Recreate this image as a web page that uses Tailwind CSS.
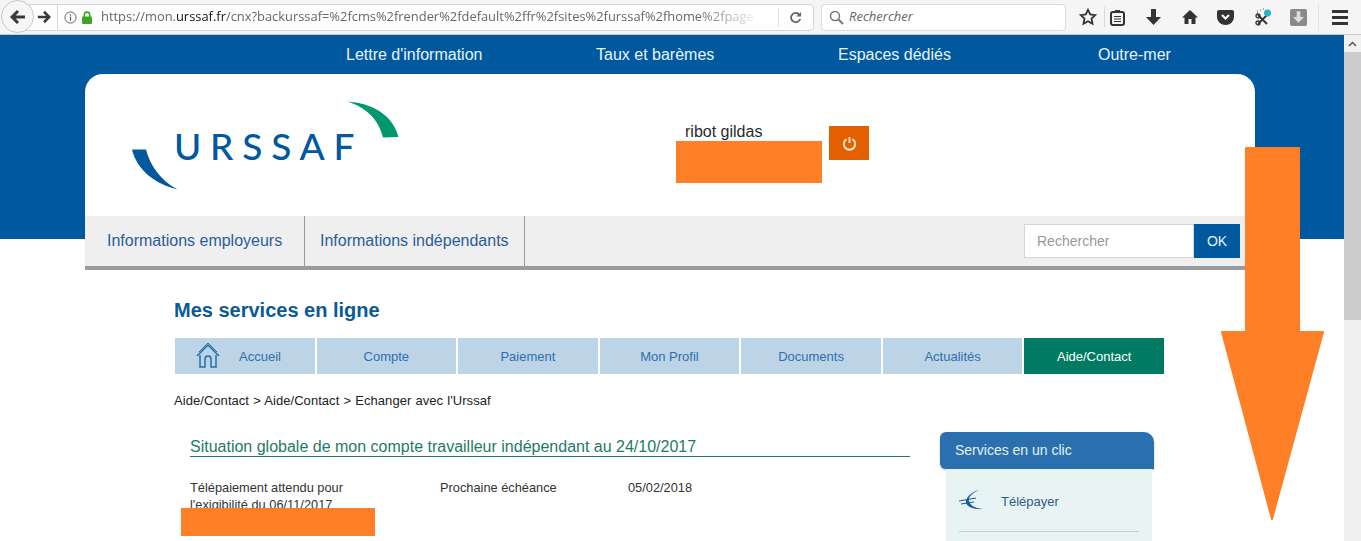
<!DOCTYPE html>
<html lang="fr">
<head>
    <meta charset="UTF-8">
    <title>Urssaf - Mes services en ligne</title>
    <script src="https://cdn.jsdelivr.net/npm/@tailwindcss/browser@4"></script>
</head>
<body class="h-[541px] w-[1361px] overflow-hidden bg-white font-['Liberation_Sans',Arial,sans-serif] relative">
    <!-- browser toolbar -->
    <div class="h-[35px] bg-[#f5f5f5] border-b border-[#c3ccd6] flex items-center relative">
        <div class="absolute left-[1px] top-[0px] w-[33px] h-[33px] rounded-full bg-[#f6f6f6] border border-[#c8c8c8] flex items-center justify-center z-10">
            <svg width="16" height="16" viewBox="0 0 16 16"><path d="M8 2 2 8l6 6M2.500 8H15" fill="none" stroke="#3a3a3a" stroke-width="3"/></svg>
        </div>
        <div class="ml-[20px] w-[794px] h-[27px] bg-white border border-[#d5d5d5] rounded-r-sm flex items-center">
            <svg class="ml-[16px]" width="14" height="14" viewBox="0 0 16 16"><path d="M8 2 14 8l-6 6M13 8H1" fill="none" stroke="#3a3a3a" stroke-width="3"/></svg>
            <div class="w-px h-[27px] bg-[#d5d5d5] ml-[6px]"></div>
            <svg class="ml-[6px]" width="13" height="13" viewBox="0 0 14 14"><circle cx="7" cy="7" r="6" fill="none" stroke="#555" stroke-width="1"/><path d="M7 6v4.500M7 3.500v1.500" stroke="#555" stroke-width="1.300"/></svg>
            <svg class="ml-[4px]" width="12" height="13" viewBox="0 0 12 13"><rect x="1" y="5.500" width="10" height="7.500" rx="1" fill="#3ea51f"/><path d="M3.300 6V3.800a2.700 2.700 0 0 1 5.400 0V6" fill="none" stroke="#3ea51f" stroke-width="1.600"/></svg>
            <div class="ml-[8px] w-[660px] whitespace-nowrap text-[12.9px] text-[#666] font-['Open_Sans',sans-serif] [mask-image:linear-gradient(to_right,black_90%,transparent)]">https://mon.<span class="text-[#111]">urssaf.fr</span>/cnx?backurssaf=%2fcms%2frender%2fdefault%2ffr%2fsites%2furssaf%2fhome%2fpage</div>
            <div class="w-px h-[19px] bg-[#e0e0e0] ml-[17px]"></div>
            <svg class="ml-[10px]" width="13" height="13" viewBox="0 0 14 14"><path d="M11.500 4.500A5 5 0 1 0 12 8.500" fill="none" stroke="#666" stroke-width="2"/><path d="M13 1v5H8z" fill="#666"/></svg>
        </div>
        <div class="ml-[7px] w-[245px] h-[27px] bg-white border border-[#dcdcdc] rounded-sm flex items-center">
            <svg class="ml-[7px]" width="15" height="15" viewBox="0 0 15 15"><circle cx="6" cy="6" r="4.500" fill="none" stroke="#777" stroke-width="1.500"/><path d="m9.500 9.500 4.500 4.500" stroke="#777" stroke-width="2"/></svg>
            <span class="ml-[5px] italic text-[13px] text-[#666] font-['Open_Sans',sans-serif]">Rechercher</span>
        </div>
        <div class="ml-[13px] flex items-center">
            <svg width="18" height="18" viewBox="0 0 18 18"><path d="m9 1.800 2.200 4.700 5 .6-3.700 3.500 1 5.100L9 13.200l-4.500 2.500 1-5.100L1.800 7.100l5-.6z" fill="none" stroke="#333" stroke-width="1.800"/></svg>
            <div class="w-px h-[20px] bg-[#d8d8d8] ml-[7px]"></div>
            <svg class="ml-[5px]" width="15" height="17" viewBox="0 0 15 17"><rect x="1" y="3" width="13" height="13" rx="2" fill="none" stroke="#333" stroke-width="2"/><rect x="5" y="1" width="5" height="3" fill="#333"/><path d="M4 7.500h7M4 10h7M4 12.500h7" stroke="#333" stroke-width="1.200"/></svg>
            <svg class="ml-[21px]" width="15" height="16" viewBox="0 0 15 16"><path d="M5 0h5v8h5l-7.500 8L0 8h5z" fill="#333"/></svg>
            <svg class="ml-[21px]" width="16" height="16" viewBox="0 0 16 16"><path d="M8 1 0 8.500h2.500V15h4v-5h3v5h4V8.500H16z" fill="#333"/></svg>
            <svg class="ml-[19px]" width="17" height="15" viewBox="0 0 17 15"><path d="M2 0h13a2 2 0 0 1 2 2v5a8.500 8 0 0 1-17 0V2a2 2 0 0 1 2-2z" fill="#333"/><path d="m5 5 3.500 3.500L12 5" fill="none" stroke="#f5f5f5" stroke-width="2.200"/></svg>
            <svg class="ml-[21px]" width="18" height="18" viewBox="0 0 18 18"><path d="m3 16 9-9M3 7l9 9" stroke="#333" stroke-width="1.800"/><circle cx="3" cy="15" r="2" fill="none" stroke="#333" stroke-width="1.300"/><circle cx="3" cy="8" r="2" fill="none" stroke="#333" stroke-width="1.300"/><circle cx="12.500" cy="5" r="3.500" fill="#23b5c9"/><path d="M2 3h1M5 2h1M8 1h1M2 5h1" stroke="#555" stroke-width="1.200" stroke-dasharray="1 1"/></svg>
            <div class="ml-[17px] w-[17px] h-[17px] rounded-[2px] bg-[#8a8a8a] flex items-center justify-center">
                <svg width="11" height="12" viewBox="0 0 15 16"><path d="M5 0h5v8h5l-7.500 8L0 8h5z" fill="#ddd"/></svg>
            </div>
            <div class="w-px h-[28px] bg-[#e4e4e4] ml-[11px]"></div>
            <div class="ml-[13px] w-[16px] flex flex-col gap-[3px]">
                <div class="h-[3px] bg-[#333]"></div>
                <div class="h-[3px] bg-[#333]"></div>
                <div class="h-[3px] bg-[#333]"></div>
            </div>
        </div>
    </div>

    <div class="flex h-[506px]">
        <!-- page -->
        <div class="w-[1344px] bg-[linear-gradient(#00599f_204px,white_204px)]">
            <div class="w-[1170px] ml-[85px]">
                <nav class="h-[39px] text-[16px]">
                    <div class="flex pt-[8px] pl-[261px] whitespace-nowrap text-[#e6f4fb]">
                        <a class="w-[250px]">Lettre d'information</a>
                        <a class="w-[242px]">Taux et barèmes</a>
                        <a class="w-[260px]">Espaces dédiés</a>
                        <a>Outre-mer</a>
                    </div>
                </nav>

                <!-- logo and account -->
                <div class="h-[142px] bg-white rounded-t-[18px] flex">
                    <div class="relative w-[591px]">
                        <svg class="absolute left-0 top-0" width="330" height="120" viewBox="85 74 330 120">
                            <path d="M347 101.500C372 103 393 115 398.500 137L383 137.500C379 120 366 107 347 101.500z" fill="#00996f"/>
                            <path d="M132 149.500L146 149.500C150 165 160 180 177.500 189.500C155 184 137 170 132 149.500z" fill="#00599f"/>
                        </svg>
                        <span class="absolute left-[89px] top-[48px] text-[37px] leading-[48px] font-medium tracking-[8.800px] text-[#00599f] font-['Lato',sans-serif]">URSSAF</span>
                    </div>
                    <div class="pt-[50px] w-[153px] h-full">
                        <div class="pl-[9px] text-[16px] leading-[16px] text-[#2a2a2a]">ribot gildas</div>
                    </div>
                    <div class="pt-[52px]">
                        <button class="w-[40px] h-[34px] bg-[#e35f00] flex items-center justify-center">
                            <svg width="15" height="15" viewBox="0 0 15 15"><path d="M4.500 3.200a5.700 5.700 0 1 0 6 0" fill="none" stroke="#fbe3c8" stroke-width="2"/><path d="M7.500 1v6" stroke="#fbe3c8" stroke-width="2"/></svg>
                        </button>
                    </div>
                </div>

                <!-- main menu -->
                <div class="h-[54px] bg-[#efefef] border-b-4 border-[#9a9a9a] flex items-stretch text-[16px] text-[#2b5c9b]">
                    <a class="w-[220px] pl-[22px] border-r border-[#9a9a9a] flex items-center">Informations employeurs</a>
                    <a class="w-[220px] pl-[15px] border-r border-[#9a9a9a] flex items-center">Informations indépendants</a>
                    <form class="ml-auto mr-[15px] mt-[8px] flex h-[34px]">
                        <div class="w-[170px] bg-white border border-[#d5d5d5] pl-[12px] text-[14px] leading-[32px] text-[#9a9a9a]">Rechercher</div>
                        <button class="w-[46px] bg-[#00599f] text-[#e6f4fb] text-[14px]">OK</button>
                    </form>
                </div>

                <!-- content -->
                <div class="pl-[89px] pt-[29px]">
                    <h1 class="text-[20px] leading-[23px] font-bold text-[#0a5a96]">Mes services en ligne</h1>
                    <div class="mt-[16px] w-[989px] ml-[1px] grid grid-cols-7 gap-[2px] h-[36px] text-[13px] text-[#2f6fae]">
                        <a class="bg-[#bcd4e6] flex items-center">
                            <svg class="ml-[21px]" width="24" height="26" viewBox="0 0 24 26"><path d="M1 13 12 2l11 11" fill="none" stroke="#1f6fa8" stroke-width="1.500"/><path d="M4 12v12h5v-8a3 3 0 0 1 6 0v8h5V12" fill="none" stroke="#1f6fa8" stroke-width="1.500"/><path d="M3 9 12 0l9 9" fill="none" stroke="#1f6fa8" stroke-width="1"/></svg>
                            <span class="ml-[19px] mt-[2px]">Accueil</span>
                        </a>
                        <a class="bg-[#bcd4e6] flex items-center justify-center pt-[2px]">Compte</a>
                        <a class="bg-[#bcd4e6] flex items-center justify-center pt-[2px]">Paiement</a>
                        <a class="bg-[#bcd4e6] flex items-center justify-center pt-[2px]">Mon Profil</a>
                        <a class="bg-[#bcd4e6] flex items-center justify-center pt-[2px]">Documents</a>
                        <a class="bg-[#bcd4e6] flex items-center justify-center pt-[2px]">Actualités</a>
                        <a class="bg-[#007a62] text-white flex items-center justify-center pt-[2px]">Aide/Contact</a>
                    </div>
                    <div class="mt-[20px] text-[13px] tracking-[0.05px] [word-spacing:0.5px] leading-[14px] text-[#222]">Aide/Contact &gt; Aide/Contact &gt; Echanger avec l'Urssaf</div>

                    <div class="flex mt-[24px]">
                        <div class="w-[736px] pl-[16px] pt-[5px]">
                            <h2 class="w-[720px] h-[20px] border-b border-[#1f7a64] text-[16px] leading-[20px] text-[#1f7a64] whitespace-nowrap">Situation globale de mon compte travailleur indépendant au 24/10/2017</h2>
                            <div class="flex mt-[22px] text-[12.800px] leading-[17px] text-[#333]">
                                <div class="w-[250px]">Télépaiement attendu pour<br>l'exigibilité du 06/11/2017</div>
                                <div class="w-[188px]">Prochaine échéance</div>
                                <div>05/02/2018</div>
                            </div>
                        </div>
                        <div class="ml-[30px] w-[214px]">
                            <div class="h-[37px] bg-[#2a70ae] rounded-tr-[10px] rounded-tl-[6px] rounded-bl-[6px] shadow-[0_1px_2px_rgba(0,0,0,0.3)] pl-[15px] text-[14px] leading-[36px] text-[#e6f1f8]">Services en un clic</div>
                            <div class="ml-[6px] w-[206px] h-[90px] bg-[#e8f4f3]">
                                <div class="mx-[13px] h-[63px] border-b border-[#c8cccc] flex items-center">
                                    <svg width="26" height="22" viewBox="0 0 26 22"><path d="M20 1C13 3 8 7 7 12s7 9 17 8C15 19 11 16 10 12S13 4 20 1z" fill="#1a5f96"/><path d="M0 12 17 9M2 15l13-2" stroke="#1a5f96" stroke-width="1.100"/></svg>
                                    <span class="ml-[16px] mt-[3px] text-[13px] text-[#2b5c8f]">Télépayer</span>
                                </div>
                            </div>
                        </div>
                    </div>
                </div>
            </div>
        </div>

        <!-- scrollbar -->
        <div class="w-[17px] bg-[#f0f0f0] flex flex-col">
            <div class="h-[17px] flex items-center justify-center">
                <svg width="9" height="6" viewBox="0 0 9 6"><path d="M1 5 4.500 1.500 8 5" fill="none" stroke="#555" stroke-width="1.500"/></svg>
            </div>
            <div class="h-[268px] bg-[#cdcdcd]"></div>
        </div>
    </div>

    <!-- redaction marks drawn over the page -->
    <div class="absolute left-[676px] top-[141px] w-[146px] h-[42px] bg-[#ff7f27]"></div>
    <div class="absolute left-[181px] top-[508px] w-[194px] h-[28px] bg-[#ff7f27]"></div>
    <svg class="absolute left-[1221px] top-[147px]" width="104" height="374" viewBox="0 0 104 374">
        <path d="M25 1H78V185H102L51 372 1 185H25z" fill="#ff7f27" stroke="#ff7f27" stroke-width="2" stroke-linejoin="round"/>
    </svg>
</body>
</html>
